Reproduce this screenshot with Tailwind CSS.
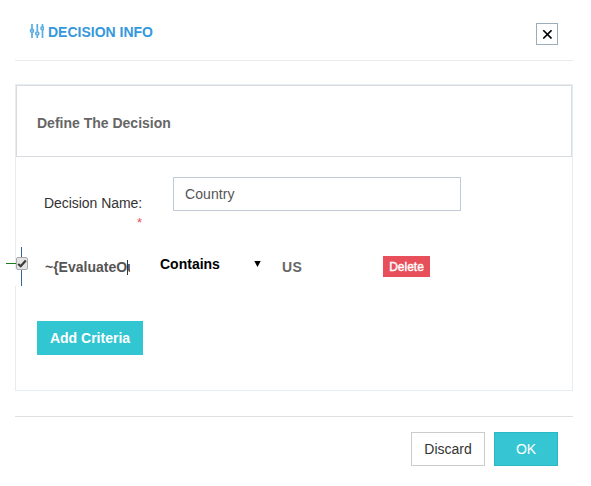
<!DOCTYPE html>
<html lang="en">
<head>
<meta charset="utf-8">
<title>Decision Info</title>
<script src="https://cdn.jsdelivr.net/npm/@tailwindcss/browser@4"></script>
</head>
<body class="bg-white">
<main class="w-[591px] h-[486px] overflow-hidden bg-white pl-[15px] pr-[18px] font-['Liberation_Sans',Arial,sans-serif] text-sm leading-5 text-[#333]">
  <header class="flex h-[61px] items-start justify-between border-b border-[#e9ebec] pl-[14px] pr-[15px]">
    <h1 class="mt-[22px] flex font-bold text-[#3598dc]">
      <svg class="mt-[2px] mr-1 h-[14px] w-[15px]" viewBox="0 0 15 14" fill="none" stroke="#5aace3" stroke-width="1.700">
        <path d="M3 0v5M3 8.500v5.500M8.300 0v7.800M8.300 11.300v2.700M13.500 0v2.500M13.500 6v8"/>
        <circle cx="3" cy="6.800" r="1.500"/><circle cx="8.300" cy="9.500" r="1.500"/><circle cx="13.400" cy="4.300" r="1.400"/>
      </svg>DECISION INFO</h1>
    <button class="mt-[23px] flex h-[22px] w-[22px] items-center justify-center border border-[#9badba] text-black" aria-label="Close">
      <svg class="h-[10px] w-[10px]" viewBox="0 0 10 10" fill="none" stroke="currentColor" stroke-width="1.6"><path d="M1.300 1.300l8.200 8.200M9.500 1.300L1.300 9.500"/></svg>
    </button>
  </header>

  <section class="mt-[23px] h-[307px] border border-[#e7ecf1]">
    <h2 class="flex h-[72px] items-center border border-[#d8dce0] pt-[3px] pl-5 font-bold text-[#666]">Define The Decision</h2>
    <div class="flex pt-5 pl-7">
      <label class="w-[129px] pt-4"><span class="block tracking-[-.05px]">Decision Name:</span><span class="block w-[98px] text-right text-[13px] text-[#e9524f]">*</span></label>
      <div class="flex h-[34px] w-[288px] items-center border border-[#c2cad8] pl-[11px] tracking-[.1px] text-[#555]">Country</div>
    </div>
    <div class="mt-[18px] -ml-[10px] flex h-[40px] items-start">
      <div class="relative -mt-1 h-[39px] w-[23px] shrink-0">
        <span class="absolute left-[9px] top-[22px] h-[17px] w-[2px] bg-white"></span>
        <span class="absolute left-0 top-[16px] h-px w-[10px] bg-[#1b7a1b]"></span>
        <span class="absolute left-[15px] top-0 h-[39px] w-px bg-[#336699]"></span>
        <span class="absolute left-[10px] top-[10px] h-[13px] w-[12px] rounded-[2px] border border-[#a9a9a9] bg-[#e4e4e4]">
          <svg class="h-[11px] w-[10px]" viewBox="0 0 10 11" fill="none" stroke="#3c3c3c" stroke-width="2.200"><path d="M1.200 6l2.500 2.300L8.800 2.500"/></svg>
        </span>
      </div>
      <div class="relative mt-[6px] ml-4 w-[85px] overflow-hidden whitespace-nowrap font-bold text-[#555]">~{EvaluateOu<span class="absolute left-[82px] top-[3px] h-[15px] w-px bg-[#333]"></span></div>
      <div class="mt-[3px] ml-[30px] w-[94px] font-bold text-black">Contains</div>
      <svg class="mt-[10px] h-[6px] w-[7px]" viewBox="0 0 7 6"><path d="M.3 0h6.400L3.500 6z" fill="#000"/></svg>
      <div class="mt-[6px] ml-[21px] w-[101px] font-bold tracking-[.4px] text-[#666]">US</div>
      <button class="mt-[5px] h-[21px] w-[47px] bg-[#e7505a] text-xs leading-[20px] text-white [-webkit-text-stroke:0.4px_white]">Delete</button>
    </div>
    <button class="mt-[30px] ml-[21px] h-[34px] w-[106px] bg-[#32c5d2] font-bold text-white">Add Criteria</button>
  </section>

  <footer class="mt-[25px] flex justify-end gap-[9px] border-t border-[#e0e0e0] pt-[15px] pr-[15px]">
    <button class="h-[34px] w-[74px] border border-[#ccc]">Discard</button>
    <button class="h-[34px] w-[64px] border border-[#2bb8c4] bg-[#36c6d3] text-white">OK</button>
  </footer>
</main>
</body>
</html>
